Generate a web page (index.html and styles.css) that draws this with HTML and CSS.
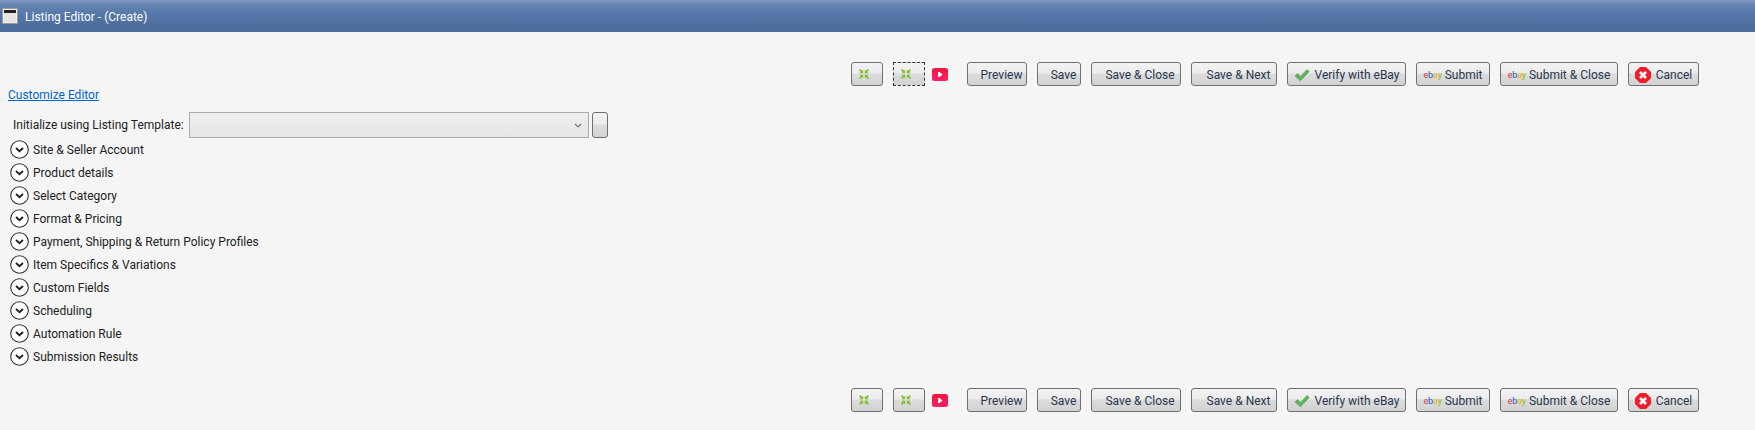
FILE: index.html
```html
<!DOCTYPE html>
<html lang="en">
<head>
<meta charset="UTF-8" />
<title>Listing Editor - (Create)</title>
<link rel="stylesheet" href="styles.css">
</head>
<body>

<svg width="0" height="0" class="defs">
  <defs>
    <linearGradient id="yt-fill" x1="0" y1="0" x2="0" y2="1">
      <stop offset="0" stop-color="#f2163a"/>
      <stop offset="1" stop-color="#ff1f6b"/>
    </linearGradient>
    <symbol id="shrink" viewBox="0 0 12 12">
      <path d="M0 1.500L1.500 0 3.500 2 5 .8V5H.8L2 3.500zM12 1.500L10.500 0 8.500 2 7 .8V5h4.200L10 3.500zM0 10.500L1.500 12l2-2L5 11.200V7H.8L2 8.500zM12 10.500L10.500 12l-2-2L7 11.200V7h4.200L10 8.500z" fill="#84bd32"/>
    </symbol>
    <symbol id="yt" viewBox="0 0 16 13">
      <rect width="16" height="13" rx="2.500" fill="url(#yt-fill)"/>
      <path d="M6 4h1.500l3 2.500-3 2.500H6z" fill="#fff"/>
    </symbol>
    <symbol id="check" viewBox="0 0 16 14">
      <path d="M1 8l2.500-2.500L6.500 8.500 13 1.500l2.200 2L6.500 12.800z" fill="#5fb35f" stroke="#4a9a52" stroke-width=".6"/>
    </symbol>
    <symbol id="cancel" viewBox="0 0 16 16">
      <path d="M5 0h6L16 5v6L11 16H5L0 11V5z" fill="#f01c2c"/>
      <path d="M5 5l6 6M11 5l-6 6" stroke="#fff" stroke-width="2.600"/>
    </symbol>
    <symbol id="expand" viewBox="0 0 19 19">
      <circle cx="9.500" cy="9.500" r="8.800" fill="#fff" stroke="#333" stroke-width="1.100"/>
      <path d="M6 8l3.500 3.200L13 8" fill="none" stroke="#222" stroke-width="1.900"/>
    </symbol>
  </defs>
</svg>

<div class="title-bar">
  <svg class="window-icon" width="16" height="16" viewBox="0 0 16 16">
    <rect x=".5" y=".5" width="15" height="15" fill="#eee" stroke="#999"/>
    <rect x="2" y="2" width="12" height="3" fill="#222"/>
    <rect x="2" y="5" width="12" height="9" fill="#e4e4e4"/>
  </svg>
  <span>Listing Editor - (Create)</span>
</div>

<div class="toolbar toolbar-top">
  <button class="btn btn-icon"><svg width="10" height="10"><use href="#shrink"/></svg></button>
  <button class="btn btn-icon btn-focus"><svg width="10" height="10"><use href="#shrink"/></svg></button>
  <svg class="yt" width="16" height="13"><use href="#yt"/></svg>
  <button class="btn btn-preview">Preview</button>
  <button class="btn btn-save">Save</button>
  <button class="btn btn-saveclose">Save &amp; Close</button>
  <button class="btn btn-savenext">Save &amp; Next</button>
  <button class="btn btn-verify"><svg width="16" height="14"><use href="#check"/></svg>Verify with eBay</button>
  <button class="btn btn-submit"><span class="ebay"><i class="e">e</i><i class="b">b</i><i class="a">a</i><i class="y">y</i></span>Submit</button>
  <button class="btn btn-submitclose"><span class="ebay"><i class="e">e</i><i class="b">b</i><i class="a">a</i><i class="y">y</i></span>Submit &amp; Close</button>
  <button class="btn btn-cancel"><svg width="16" height="16"><use href="#cancel"/></svg>Cancel</button>
</div>

<a class="customize" href="#">Customize Editor</a>

<div class="template-row">
  <label>Initialize using Listing Template:</label>
  <div class="template-select">
    <svg width="8" height="5" viewBox="0 0 8 5"><path d="M1 1l3 2.800L7 1" fill="none" stroke="#666" stroke-width="1.100"/></svg>
  </div>
  <button class="btn template-btn"></button>
</div>

<div class="sections">
  <div class="section"><svg width="19" height="19"><use href="#expand"/></svg>Site &amp; Seller Account</div>
  <div class="section"><svg width="19" height="19"><use href="#expand"/></svg>Product details</div>
  <div class="section"><svg width="19" height="19"><use href="#expand"/></svg>Select Category</div>
  <div class="section"><svg width="19" height="19"><use href="#expand"/></svg>Format &amp; Pricing</div>
  <div class="section"><svg width="19" height="19"><use href="#expand"/></svg>Payment, Shipping &amp; Return Policy Profiles</div>
  <div class="section"><svg width="19" height="19"><use href="#expand"/></svg>Item Specifics &amp; Variations</div>
  <div class="section"><svg width="19" height="19"><use href="#expand"/></svg>Custom Fields</div>
  <div class="section"><svg width="19" height="19"><use href="#expand"/></svg>Scheduling</div>
  <div class="section"><svg width="19" height="19"><use href="#expand"/></svg>Automation Rule</div>
  <div class="section"><svg width="19" height="19"><use href="#expand"/></svg>Submission Results</div>
</div>

<div class="toolbar toolbar-bottom">
  <button class="btn btn-icon"><svg width="10" height="10"><use href="#shrink"/></svg></button>
  <button class="btn btn-icon"><svg width="10" height="10"><use href="#shrink"/></svg></button>
  <svg class="yt" width="16" height="13"><use href="#yt"/></svg>
  <button class="btn btn-preview">Preview</button>
  <button class="btn btn-save">Save</button>
  <button class="btn btn-saveclose">Save &amp; Close</button>
  <button class="btn btn-savenext">Save &amp; Next</button>
  <button class="btn btn-verify"><svg width="16" height="14"><use href="#check"/></svg>Verify with eBay</button>
  <button class="btn btn-submit"><span class="ebay"><i class="e">e</i><i class="b">b</i><i class="a">a</i><i class="y">y</i></span>Submit</button>
  <button class="btn btn-submitclose"><span class="ebay"><i class="e">e</i><i class="b">b</i><i class="a">a</i><i class="y">y</i></span>Submit &amp; Close</button>
  <button class="btn btn-cancel"><svg width="16" height="16"><use href="#cancel"/></svg>Cancel</button>
</div>

</body>
</html>
```

FILE: styles.css
```css
html, body {
  height: 100%;
}
body {
  margin: 0;
  overflow: hidden;
  font-family: Roboto, "Open Sans", sans-serif;
  font-size: 12px;
  color: #222;
  background-color: #f5f5f5;
}
.defs {
  display: block;
  height: 0;
}

/* Title bar */
.title-bar {
  display: flex;
  align-items: center;
  gap: 7px;
  height: 32px;
  padding-left: 2px;
  box-sizing: border-box;
  color: #fff;
  background: linear-gradient(#8198c3 0, #6582b2 6px, #587aac 12px, #4c6c9d 26px, #4c6c9d 100%);
}
.title-bar span {
  padding-top: 1px;
}

/* Toolbars */
.toolbar {
  display: flex;
  justify-content: flex-end;
  align-items: center;
  height: 24px;
  padding-right: 56px;
}
.toolbar-top {
  margin-top: 30px;
}
.toolbar-bottom {
  margin-top: 20px;
}
.btn {
  display: flex;
  align-items: center;
  justify-content: center;
  gap: 3px;
  height: 24px;
  padding: 1px 0 0;
  margin-left: 10px;
  box-sizing: border-box;
  font: inherit;
  color: #2a3850;
  white-space: nowrap;
  border: 1px solid #707070;
  border-radius: 3px;
  background: linear-gradient(#f3f3f3 0, #ececec 45%, #dcdcdc 50%, #d2d2d2 100%);
}
.btn-icon {
  width: 32px;
  padding-right: 6px;
  padding-bottom: 1px;
}
.btn-focus {
  border: 1px dashed #333;
  border-radius: 0;
}
.yt {
  margin: 0 19px 0 7px;
}
.yt + .btn {
  margin-left: 0;
}
.btn-preview {
  width: 60px;
  padding-left: 9px;
}
.btn-save {
  width: 44px;
  padding-left: 9px;
}
.btn-saveclose {
  width: 90px;
  padding-left: 8px;
}
.btn-savenext {
  width: 86px;
  padding-left: 9px;
}
.btn-verify {
  width: 119px;
  gap: 5px;
}
.btn-submit {
  width: 74px;
}
.btn-submitclose {
  width: 118px;
}
.btn-cancel {
  width: 71px;
  gap: 5px;
}
.ebay {
  display: inline-flex;
  font-size: 9px;
  line-height: 10px;
}
.ebay i {
  font-style: normal;
  margin-right: -0.2px;
}
.ebay .e { color: #e53238; }
.ebay .b { color: #0064d2; }
.ebay .a { color: #f5af02; }
.ebay .y { color: #86b817; }

/* Link and template picker */
.customize {
  display: block;
  width: max-content;
  margin: 0 0 0 8px;
  color: #0066cc;
  line-height: 18px;
}
.template-row {
  display: flex;
  align-items: center;
  height: 26px;
  margin: 8px 0 0 13px;
}
.template-row label {
  width: 176px;
  white-space: nowrap;
}
.template-select {
  display: flex;
  align-items: center;
  justify-content: flex-end;
  width: 400px;
  height: 26px;
  padding-right: 6px;
  box-sizing: border-box;
  border: 1px solid #acacac;
  background: linear-gradient(#f0f0f0, #e5e5e5);
}
.template-btn {
  width: 16px;
  height: 26px;
  margin-left: 3px;
}

/* Collapsed sections */
.sections {
  margin: 0 0 0 10px;
}
.section {
  display: flex;
  align-items: center;
  gap: 4px;
  height: 23px;
}
```
